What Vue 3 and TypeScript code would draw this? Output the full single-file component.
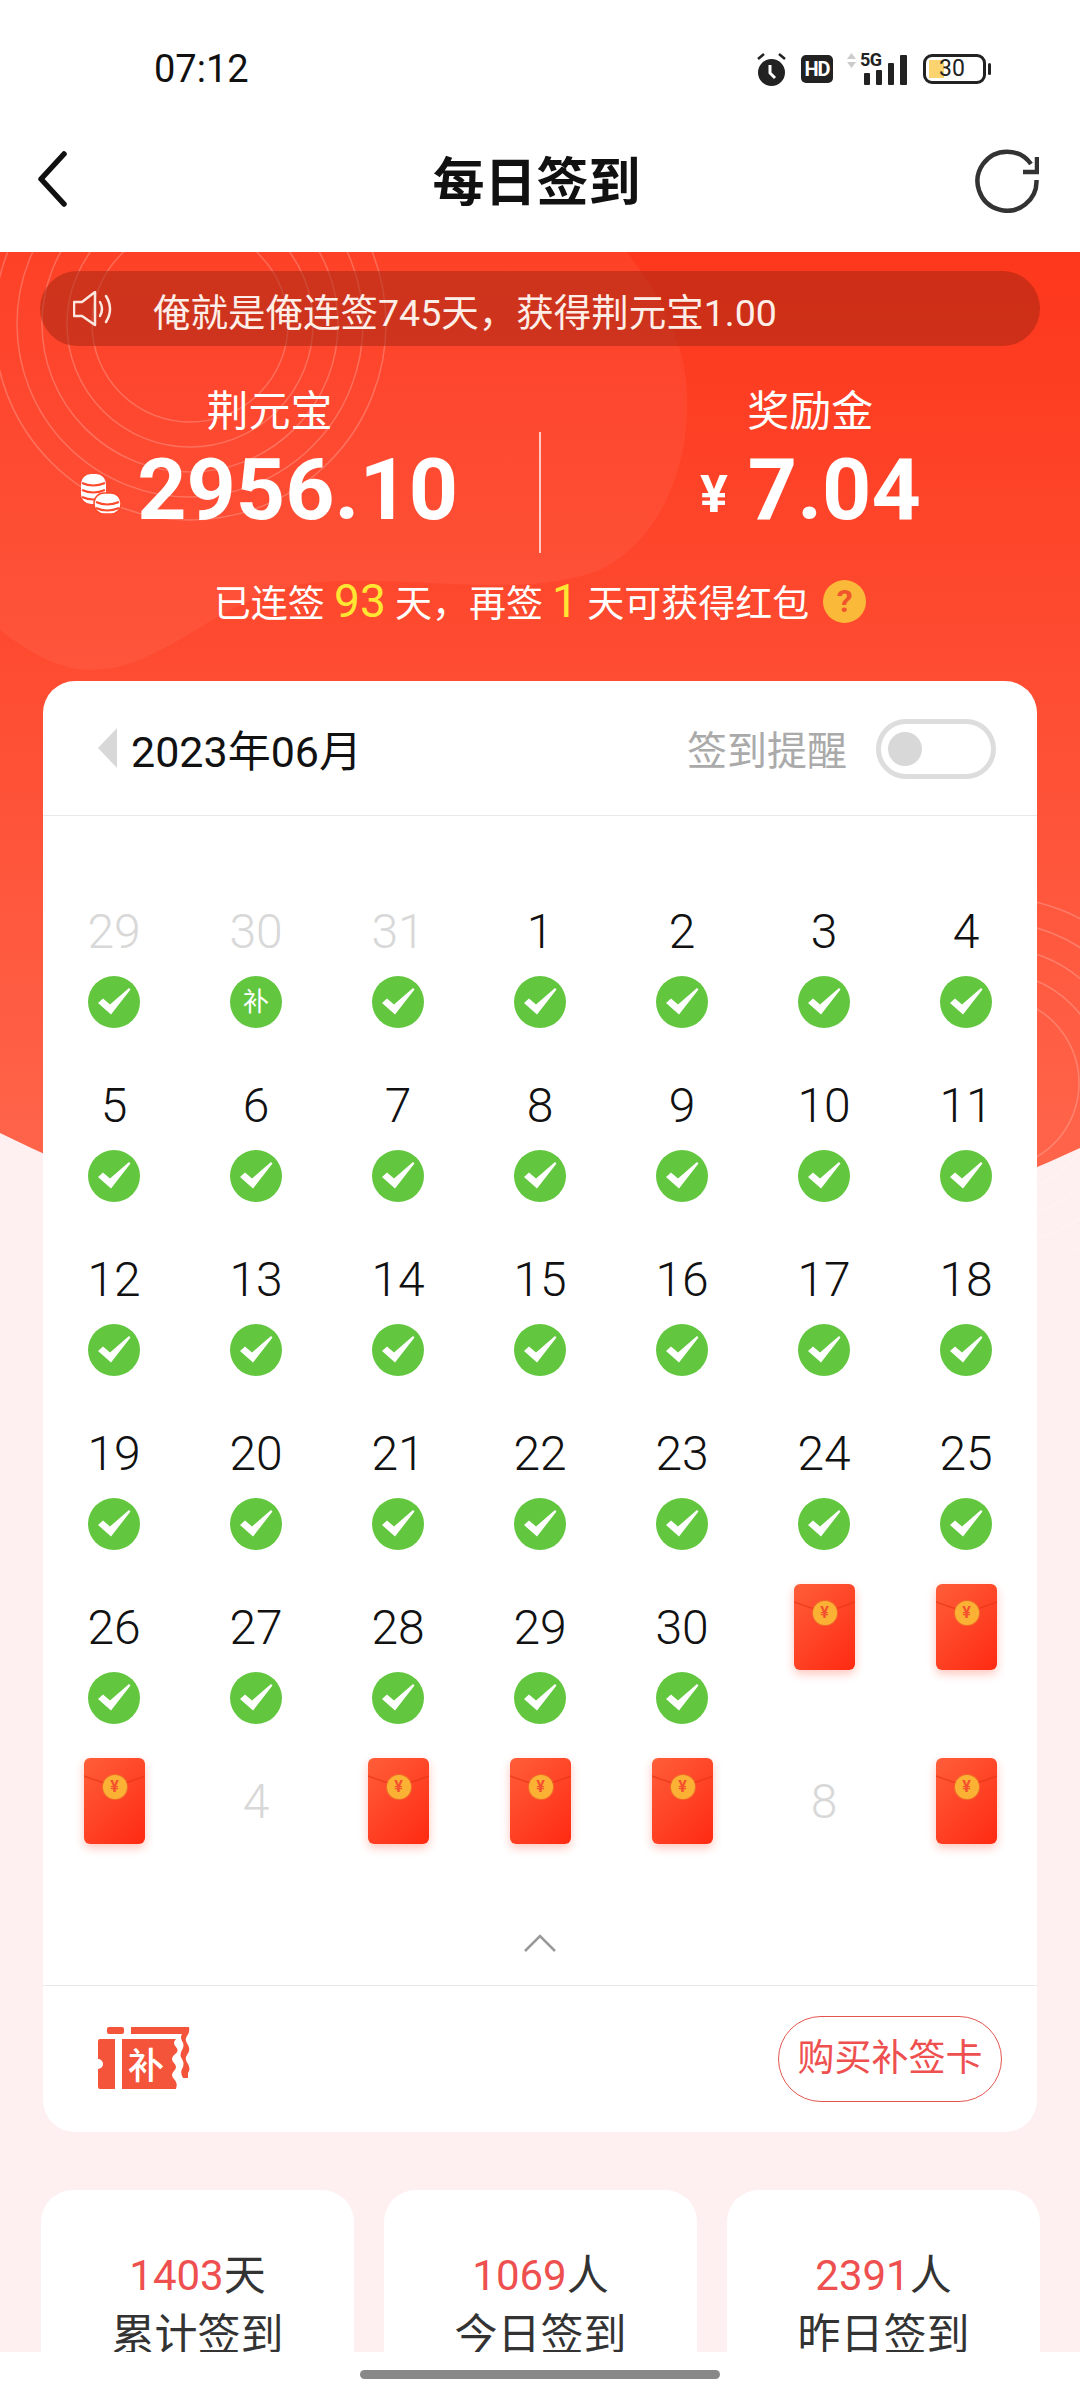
<script setup lang="ts">
interface Day {
  label: string
  kind: 'check' | 'patch' | 'packet' | 'plain'
  muted?: boolean
}

const days: Day[] = [
  { label: '29', kind: 'check', muted: true },
  { label: '30', kind: 'patch', muted: true },
  { label: '31', kind: 'check', muted: true },
]
for (let d = 1; d <= 30; d++) days.push({ label: String(d), kind: 'check' })
days.push({ label: '', kind: 'packet' }, { label: '', kind: 'packet' })
days.push({ label: '', kind: 'packet' })
days.push({ label: '4', kind: 'plain', muted: true })
days.push({ label: '', kind: 'packet' }, { label: '', kind: 'packet' }, { label: '', kind: 'packet' })
days.push({ label: '8', kind: 'plain', muted: true })
days.push({ label: '', kind: 'packet' })

const rings = [98, 123, 148, 173, 196]
const rightRings = [86, 111, 136, 161, 186]

const totals = [
  { num: '1403', unit: '天', name: '累计签到' },
  { num: '1069', unit: '人', name: '今日签到' },
  { num: '2391', unit: '人', name: '昨日签到' },
]
</script>

<template>
  <div class="page">
    <svg class="decor" viewBox="0 252 1080 1000" width="1080" height="1000">
      <defs>
        <linearGradient id="redBg" x1="0" y1="0" x2="0" y2="1">
          <stop offset="0" stop-color="#fd371c" />
          <stop offset="1" stop-color="#ff6a50" />
        </linearGradient>
      </defs>
      <path d="M0 252H1080V1148Q540 1400 0 1133Z" fill="url(#redBg)" />
      <path
        d="M0 630Q50 670 90 670C170 670 220 590 320 582C420 575 520 600 600 570C680 530 700 420 680 350C665 300 640 270 627 252H0Z"
        fill="#fff"
        fill-opacity="0.05"
      />
      <g fill="none" stroke="#fff" stroke-opacity="0.22" stroke-width="1.5">
        <circle v-for="r in rings" :key="r" cx="190" cy="324" :r="r" />
        <circle v-for="r in rightRings" :key="r" cx="993" cy="1083" :r="r" />
      </g>
    </svg>

    <div class="status">
      <span class="time">07:12</span>
      <div class="status-icons">
        <svg width="31" height="34" viewBox="0 0 31 34">
          <circle cx="15.5" cy="20.5" r="13.5" fill="#222" />
          <path d="M2 7 8 2M29 7 23 2" stroke="#222" stroke-width="2.5" fill="none" />
          <path d="M14 13V21L19 26" stroke="#fff" stroke-width="3" fill="none" />
        </svg>
        <span class="hd">HD</span>
        <div class="signal">
          <svg width="60" height="32" viewBox="0 0 60 32">
            <path d="M4.5 0 9 6H0ZM4.5 15 0 9H9Z" fill="#ccc" />
            <rect x="17" y="20" width="6" height="12" rx="1" fill="#222" />
            <rect x="29" y="17" width="6" height="15" rx="1" fill="#222" />
            <rect x="41" y="10" width="6" height="22" rx="1" fill="#222" />
            <rect x="53" y="2" width="7" height="30" rx="1" fill="#222" />
          </svg>
          <span class="five-g">5G</span>
        </div>
        <div class="battery">
          <div class="battery-body">
            <span class="battery-fill"></span>
            <span class="battery-num">30</span>
          </div>
          <span class="battery-cap"></span>
        </div>
      </div>
    </div>

    <div class="nav">
      <svg class="back" width="34" height="56" viewBox="0 0 34 56">
        <path d="M28 3 5 28 28 53" fill="none" stroke="#111" stroke-width="5.500" stroke-linecap="round" stroke-linejoin="round" />
      </svg>
      <span class="title">每日签到</span>
      <svg class="refresh" width="64" height="66" viewBox="0 0 64 66">
        <path d="M56 17A29.5 29.5 0 1 0 61.5 33" fill="none" stroke="#333" stroke-width="4.5" />
        <path d="M62 10V25H48" fill="none" stroke="#333" stroke-width="4.5" />
      </svg>
    </div>

    <div class="hero">
      <div class="notice">
        <svg width="42" height="36" viewBox="0 0 42 36">
          <path d="M1 11H9L22 1V34L9 25H1Z" fill="none" stroke="#fbe7df" stroke-width="2.5" stroke-linejoin="round" />
          <path d="M27 11Q31 18 27 25M33 5Q41 18 33 31" fill="none" stroke="#fbe7df" stroke-width="2.5" stroke-linecap="round" />
        </svg>
        <span class="notice-text">俺就是俺连签745天&#65292;获得荆元宝1.00</span>
      </div>

      <div class="stats">
        <div class="stat">
          <div class="stat-label">荆元宝</div>
          <div class="stat-value">
            <svg class="coins" width="40" height="40" viewBox="0 0 40 40">
              <rect x="0" y="0" width="25" height="30" rx="10" fill="#fff" />
              <path d="M1 9Q12 14 24 9M1 16Q12 21 24 16M1 23Q12 28 24 23" fill="none" stroke="#fd4a2b" stroke-width="2" />
              <rect x="13" y="19" width="27" height="21" rx="10" fill="#fff" stroke="#fd4a2b" stroke-width="1.5" />
              <path d="M15 28Q26 33 38 28M15 34Q26 39 38 34" fill="none" stroke="#fd4a2b" stroke-width="2" />
            </svg>
            <span class="amount">2956.10</span>
          </div>
        </div>
        <div class="split"></div>
        <div class="stat">
          <div class="stat-label">奖励金</div>
          <div class="stat-value">
            <span class="yen">¥</span>
            <span class="amount">7.04</span>
          </div>
        </div>
      </div>

      <div class="streak">
        <span>已连签 <em>93</em> 天&#65292;再签 <em>1</em> 天可获得红包</span>
        <span class="ask">?</span>
      </div>
    </div>

    <div class="card">
      <div class="card-head">
        <div class="month">
          <span class="tri"></span>
          <span>2023年06月</span>
        </div>
        <div class="remind">
          <span>签到提醒</span>
          <span class="toggle"><i></i></span>
        </div>
      </div>

      <div class="grid">
        <div v-for="(day, i) in days" :key="i" class="cell">
          <div v-if="day.kind === 'packet'" class="packet">
            <svg width="61" height="40" viewBox="0 0 61 40">
              <path d="M0 18Q16 24 30 28Q46 24 61 18" fill="none" stroke="#e5361a" stroke-opacity="0.7" stroke-width="1.5" />
            </svg>
            <span class="seal">¥</span>
          </div>
          <template v-else>
            <div class="num" :class="{ muted: day.muted }">{{ day.label }}</div>
            <svg v-if="day.kind === 'check'" width="52" height="52" viewBox="0 0 52 52">
              <circle cx="26" cy="26" r="26" fill="#62c63f" />
              <path d="M10 27 15 22.500 22 28.500 41 12 42.500 13.500 23 38.500Z" fill="#fff" />
            </svg>
            <span v-else-if="day.kind === 'patch'" class="patch">补</span>
          </template>
        </div>
      </div>

      <svg class="up" width="34" height="18" viewBox="0 0 34 18">
        <path d="M2 17 17 2 32 17" fill="none" stroke="#999" stroke-width="2.500" />
      </svg>

      <div class="card-foot">
        <svg width="92" height="64" viewBox="0 0 92 64">
          <g fill="#f4553a">
            <rect x="9" y="0" width="17" height="7" rx="2" />
            <path d="M33 0H91Q92 5 89 9Q86 13 90 18Q93 23 89 28Q86 32 90 37Q93 42 90 46V51H85Q82 46 84 42Q87 37 84 32Q81 28 84 23Q87 18 84 14Q82 10 84 7H33Z" />
            <path d="M2 12H17V62H2Q0 62 0 60V42A5 5 0 0 0 0 32V14Q0 12 2 12Z" />
            <path d="M24 12H78Q74 16 78 20Q82 24 76 28Q72 32 76 36Q80 40 76 44Q72 48 76 52Q80 56 78 62H24Z" />
          </g>
          <text x="48" y="52" text-anchor="middle" font-size="36" font-weight="500" fill="#fff" font-family="Noto Sans CJK SC">补</text>
        </svg>
        <span class="buy">购买补签卡</span>
      </div>
    </div>

    <div class="totals">
      <div v-for="item in totals" :key="item.name" class="total">
        <div><span class="total-num">{{ item.num }}</span>{{ item.unit }}</div>
        <div class="total-name">{{ item.name }}</div>
      </div>
    </div>

    <div class="home"><span></span></div>
  </div>
</template>

<style>
html,
body {
  margin: 0;
  background: #fff;
}
</style>

<style scoped>
.page {
  position: relative;
  width: 1080px;
  height: 2400px;
  overflow: hidden;
  background: #fef0f0;
  font-family: Roboto, 'Noto Sans CJK SC', sans-serif;
  color: #333;
}

.decor {
  position: absolute;
  left: 0;
  top: 252px;
}

.status {
  display: flex;
  align-items: center;
  box-sizing: border-box;
  height: 138px;
  padding: 0 89px 0 154px;
  background: #fff;
}

.time {
  font-size: 38px;
  color: #111;
}

.status-icons {
  display: flex;
  align-items: center;
  gap: 14px;
  margin-left: auto;
}

.hd {
  width: 32px;
  height: 28px;
  border-radius: 5px;
  background: #222;
  color: #fff;
  font-size: 20px;
  font-weight: 700;
  line-height: 28px;
  text-align: center;
  letter-spacing: -1px;
}

.signal {
  position: relative;
  width: 60px;
  height: 32px;
}

.five-g {
  position: absolute;
  left: 13px;
  top: -3px;
  font-size: 18px;
  font-weight: 700;
  line-height: 20px;
  letter-spacing: -0.5px;
  color: #222;
}

.battery {
  display: flex;
  align-items: center;
  gap: 2px;
  margin-left: 2px;
}

.battery-body {
  position: relative;
  box-sizing: border-box;
  width: 63px;
  height: 30px;
  border: 3px solid #222;
  border-radius: 9px;
}

.battery-fill {
  position: absolute;
  left: 3px;
  top: 3px;
  bottom: 3px;
  width: 15px;
  background: #fbd36f;
}

.battery-num {
  position: absolute;
  left: 13px;
  top: 0;
  font-size: 23px;
  line-height: 24px;
  color: #222;
}

.battery-cap {
  width: 3px;
  height: 12px;
  border-radius: 2px;
  background: #222;
}

.nav {
  display: grid;
  grid-template-columns: 1fr auto 1fr;
  align-items: center;
  box-sizing: border-box;
  height: 114px;
  padding: 0 41px 30px 36px;
  background: #fff;
}

.back {
  margin-top: -2px;
}

.refresh {
  justify-self: end;
}

.title {
  position: relative;
  top: -2px;
  left: -1px;
  font-size: 52px;
  font-weight: 700;
  color: #111;
}

.hero {
  position: relative;
  padding-top: 19px;
}

.notice {
  display: flex;
  align-items: center;
  gap: 38px;
  height: 75px;
  margin: 0 40px;
  padding-left: 33px;
  border-radius: 38px;
  background: rgba(160, 35, 15, 0.5);
  color: #fdeee8;
  font-size: 37.500px;
}

.notice-text {
  margin-top: 2px;
}

.stats {
  display: flex;
  margin-top: 41px;
}

.stat {
  flex: 1;
  text-align: center;
  color: #fff;
}

.stat-label {
  font-size: 42px;
  line-height: 50px;
}

.stat-value {
  display: flex;
  align-items: center;
  justify-content: center;
  margin-top: 9px;
  height: 88px;
}

.coins {
  margin-right: 16px;
  margin-top: 8px;
}

.amount {
  font-size: 86px;
  font-weight: 700;
  line-height: 88px;
}

.yen {
  margin-right: 20px;
  margin-top: 8px;
  font-size: 52px;
  font-weight: 700;
}

.split {
  flex: none;
  width: 1.5px;
  height: 121px;
  margin-top: 45px;
  background: rgba(255, 255, 255, 0.7);
}

.streak {
  display: flex;
  align-items: center;
  justify-content: center;
  gap: 14px;
  height: 50px;
  margin-top: 23px;
  color: #fff;
  font-size: 37px;
}

.streak em {
  font-style: normal;
  font-size: 46px;
  line-height: 50px;
  color: #ffe633;
}

.ask {
  width: 43px;
  height: 43px;
  border-radius: 50%;
  background: #fbb93a;
  color: #f0552c;
  font-size: 32px;
  font-weight: 700;
  line-height: 43px;
  text-align: center;
}

.card {
  position: relative;
  margin: 55px 43px 0;
  border-radius: 32px;
  background: #fff;
}

.card-head {
  display: flex;
  align-items: center;
  justify-content: space-between;
  box-sizing: border-box;
  height: 135px;
  padding: 0 41px 0 55px;
  border-bottom: 1px solid #e8e8e8;
}

.month {
  display: flex;
  align-items: center;
  gap: 14px;
  font-size: 43px;
  color: #111;
}

.tri {
  width: 0;
  height: 0;
  border-top: 20px solid transparent;
  border-bottom: 20px solid transparent;
  border-right: 19px solid #d8d8d8;
}

.remind {
  display: flex;
  align-items: center;
  gap: 29px;
  color: #aaa;
  font-size: 40px;
}

.toggle {
  display: flex;
  align-items: center;
  box-sizing: border-box;
  width: 120px;
  height: 60px;
  margin-top: 1px;
  padding-left: 7px;
  border: 5px solid #ddd;
  border-radius: 30px;
}

.toggle i {
  width: 34px;
  height: 34px;
  border-radius: 50%;
  background: #d8d8d8;
}

.grid {
  display: grid;
  grid-template-columns: repeat(7, 142px);
  row-gap: 48px;
  padding-top: 86px;
}

.cell {
  display: flex;
  flex-direction: column;
  align-items: center;
  gap: 17px;
  height: 126px;
}

.num {
  height: 57px;
  font-size: 48px;
  font-weight: 300;
  line-height: 59px;
  color: #111;
}

.num.muted {
  color: #d8d8d8;
}

.patch {
  width: 52px;
  height: 52px;
  border-radius: 50%;
  background: #62c63f;
  color: #fff;
  font-size: 26px;
  line-height: 52px;
  text-align: center;
}

.packet {
  position: relative;
  width: 61px;
  height: 86px;
  margin-top: -14px;
  border-radius: 6px;
  background: linear-gradient(135deg, #ff5e3a, #ff2a12);
  box-shadow: 0 4px 10px rgba(255, 70, 40, 0.3);
}

.packet svg {
  display: block;
}

.seal {
  position: absolute;
  left: 19px;
  top: 17px;
  width: 24px;
  height: 24px;
  border-radius: 50%;
  background: #fbb234;
  box-shadow: 0 0 0 1px #ee6d2a;
  color: #f4502f;
  font-size: 16px;
  font-weight: 700;
  line-height: 24px;
  text-align: center;
}

.up {
  display: block;
  margin: 36px auto 33px;
}

.card-foot {
  display: flex;
  align-items: center;
  justify-content: space-between;
  box-sizing: border-box;
  height: 147px;
  padding: 0 35px 0 55px;
  border-top: 1px solid #e8e8e8;
}

.buy {
  box-sizing: border-box;
  width: 224px;
  height: 86px;
  border: 1.5px solid #e5554f;
  border-radius: 43px;
  color: #ee5050;
  font-size: 37px;
  line-height: 83px;
  text-align: center;
}

.totals {
  position: relative;
  display: grid;
  grid-template-columns: repeat(3, 313px);
  gap: 30px;
  margin: 58px 41px 0;
}

.total {
  box-sizing: border-box;
  height: 240px;
  padding-top: 61px;
  border-radius: 32px;
  background: #fff;
  font-size: 42px;
  line-height: 50px;
  text-align: center;
}

.total-num {
  color: #ee4f4f;
}

.total-name {
  margin-top: 9px;
  font-size: 43px;
}

.home {
  position: absolute;
  left: 0;
  right: 0;
  bottom: 0;
  height: 48px;
  background: #fff;
}

.home span {
  position: absolute;
  left: 360px;
  top: 18px;
  width: 360px;
  height: 9px;
  border-radius: 5px;
  background: #888;
}
</style>
